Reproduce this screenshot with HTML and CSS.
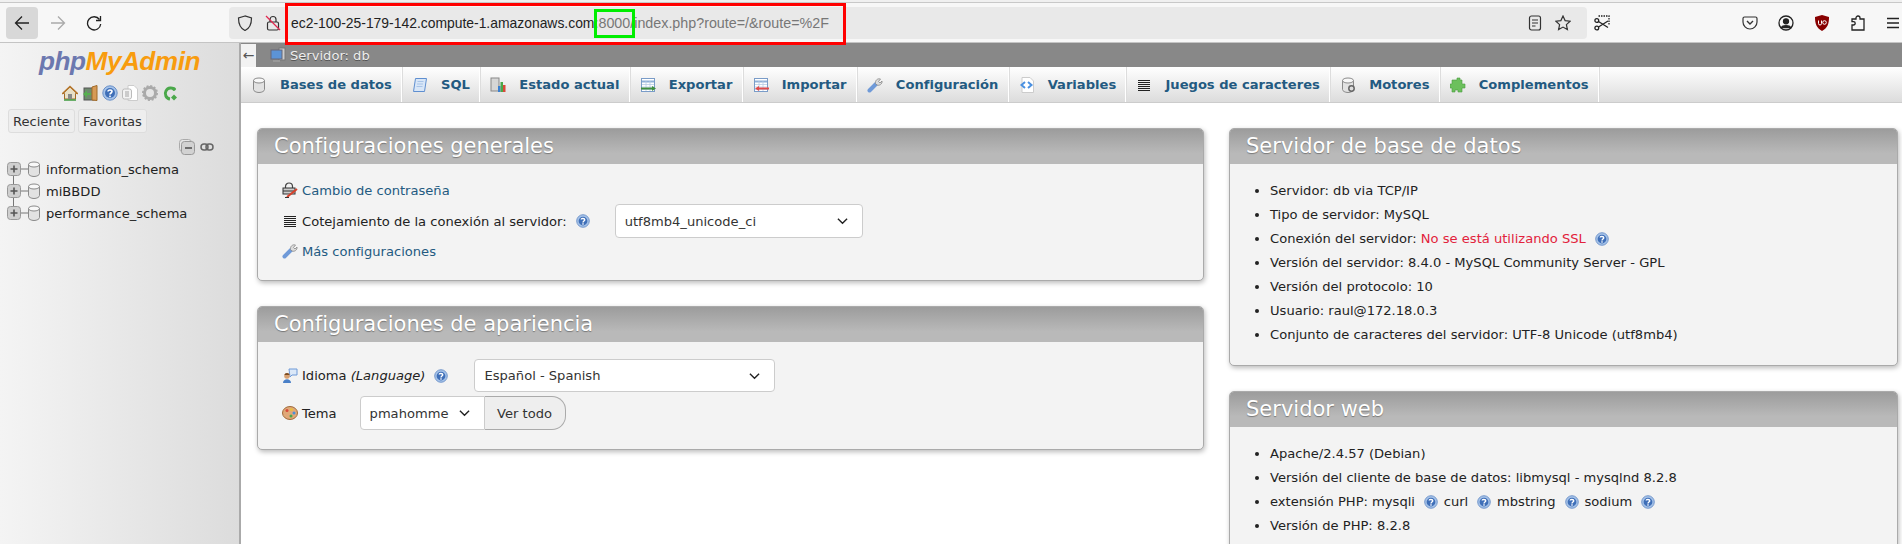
FILE: index.html
```html
<!DOCTYPE html>
<html lang="es">
<head>
    <meta charset="UTF-8">
    <title>phpMyAdmin</title>
    <link rel="stylesheet" href="styles.css">
</head>
<body>
<svg class="defs" width="0" height="0">
    <symbol id="i-help" viewBox="0 0 16 16">
        <circle cx="8" cy="8" r="7.2" fill="#a5c2e8" stroke="#6a90c8"/>
        <circle cx="8" cy="8" r="5" fill="#3f6fb8"/>
        <path d="M6 6.4C6 4.6 10 4.6 10 6.6 10 8 8 8 8 9.6" fill="none" stroke="#fff" stroke-width="1.6"/>
        <rect x="7.2" y="10.6" width="1.6" height="1.6" fill="#fff"/>
    </symbol>
    <symbol id="i-db" viewBox="0 0 16 16">
        <path d="M2.500 3.500v9C2.500 14 5 15.500 8 15.500s5.500-1.500 5.500-3v-9z" fill="#e2e2e2" stroke="#8a8a8a"/>
        <ellipse cx="8" cy="3.500" rx="5.500" ry="2.500" fill="#f8f8f8" stroke="#8a8a8a"/>
    </symbol>
    <symbol id="i-plus" viewBox="0 0 21 22">
        <rect x=".5" y="4.500" width="13" height="13" rx="3" fill="#cfcfcf" stroke="#999"/>
        <path d="M3.500 11h7M7 7.500v7" stroke="#555" stroke-width="1.600"/>
        <path d="M14 11h7" stroke="#777"/>
    </symbol>
    <symbol id="i-lines" viewBox="0 0 16 16">
        <path d="M2 3.500h12M2 5.500h12M2 7.500h12M2 9.500h12M2 11.500h12M2 13.500h12" stroke="#222" stroke-width="1"/>
    </symbol>
    <symbol id="i-wrench" viewBox="0 0 16 16">
        <path d="M2.500 13.500 9 7" stroke="#6f9ad8" stroke-width="4" stroke-linecap="round"/>
        <path d="M8.500 6.500C8 3.500 10.500 1 13.500 2L11.500 4.500 13 6 15 4C15.500 7 12.500 9 10 8z" fill="#dcdcdc" stroke="#888" stroke-width=".8"/>
    </symbol>
    <symbol id="i-sheet" viewBox="0 0 16 16">
        <rect x="1.500" y="1.500" width="13" height="13" fill="#fff" stroke="#7a9cc8"/>
        <path d="M2 4.500h12" stroke="#8fb0d8" stroke-width="2"/>
        <path d="M2 7.500h12M2 10h12M2 12.500h12M6 4v10M10 4v10" stroke="#b7cbe4" stroke-width=".8"/>
    </symbol>
</svg>

<div class="strip"></div>
<header class="toolbar">
    <button class="nav-btn is-active" aria-label="Atrás">
        <svg width="16" height="16" viewBox="0 0 16 16" fill="none" stroke="#222" stroke-width="1.300"><path d="M15 8H1.500M8 1.500 1.500 8 8 14.500"/></svg>
    </button>
    <button class="nav-btn" aria-label="Adelante">
        <svg width="16" height="16" viewBox="0 0 16 16" fill="none" stroke="#aaa" stroke-width="1.300"><path d="M1 8h13.500M8 1.500 14.500 8 8 14.500"/></svg>
    </button>
    <button class="nav-btn" aria-label="Recargar">
        <svg width="16" height="16" viewBox="0 0 16 16" fill="none" stroke="#222" stroke-width="1.300"><path d="M13.500 4.500A6.600 6.600 0 1 0 14.700 9"/><path d="M14.500 1v4.500H10"/></svg>
    </button>
    <div class="urlbar">
        <svg class="url-icon" width="16" height="16" viewBox="0 0 16 16" fill="none" stroke="#333" stroke-width="1.200"><path d="M8 1 1.500 3c0 5 1 10 6.500 12.500C13.500 13 14.500 8 14.500 3z"/></svg>
        <svg class="url-icon lock" width="16" height="16" viewBox="0 0 16 16" fill="none" stroke="#333" stroke-width="1.200"><rect x="2.500" y="7" width="11" height="8" rx="1.500"/><path d="M5 7V4.500a3 3 0 0 1 6 0V7"/><path d="M1 1l14 14" stroke="#e22850"/></svg>
        <div class="url"><span class="host">ec2-100-25-179-142.compute-1.amazonaws.com</span>:8000/index.php?route=/&amp;route=%2F</div>
        <svg class="url-icon" width="16" height="16" viewBox="0 0 16 16" fill="none" stroke="#333" stroke-width="1.200"><rect x="2.500" y="1" width="11" height="14" rx="2"/><path d="M5 5h6M5 8h6M5 11h3.500"/></svg>
        <svg class="url-icon star" width="16" height="16" viewBox="0 0 16 16" fill="none" stroke="#333" stroke-width="1.200"><path d="M8 1l2.100 4.600 5 .6-3.700 3.400 1 5L8 12.100 3.600 14.600l1-5L.9 6.200l5-.6z"/></svg>
    </div>
    <svg class="shot" width="16" height="16" viewBox="0 0 16 16" fill="none" stroke="#222" stroke-width="1.300"><path d="M4.500 1h10.500v9.500" stroke-dasharray="1.500 1"/><circle cx="2.800" cy="5.500" r="1.900"/><circle cx="2.800" cy="13" r="1.900"/><path d="M4.500 6.500 14 12.500M4.500 12 14 6"/></svg>
    <div class="tools">
        <svg width="16" height="16" viewBox="0 0 16 16" fill="none" stroke="#333" stroke-width="1.200"><path d="M2.500 2h11A1.500 1.500 0 0 1 15 3.500V7A7 7 0 0 1 1 7V3.500A1.500 1.500 0 0 1 2.500 2z"/><path d="M5 6l3 3 3-3" stroke-width="1.400"/></svg>
        <svg width="16" height="16" viewBox="0 0 16 16" fill="none" stroke="#222" stroke-width="1.300"><circle cx="8" cy="8" r="7"/><circle cx="8" cy="6.300" r="2.500" fill="#222"/><path d="M3.500 12.500c1-2.500 8-2.500 9 0z" fill="#222"/></svg>
        <svg width="16" height="16" viewBox="0 0 16 16"><path d="M8 0 15 2c0 7-1.500 11-7 14C2.500 13 1 9 1 2z" fill="#800"/><path d="M4.500 5.500v3a1.500 1.500 0 0 0 3 0v-3" fill="none" stroke="#fff" stroke-width="1"/><circle cx="10.500" cy="7.500" r="1.800" fill="none" stroke="#fff"/></svg>
        <svg width="16" height="16" viewBox="0 0 16 16" fill="none" stroke="#222" stroke-width="1.300"><path d="M2 15V10h1.500a1.700 1.700 0 0 0 0-3.400H2V4h4V3a2 2 0 0 1 4 0v1h4v11z"/></svg>
        <svg width="14" height="16" viewBox="0 0 14 16" stroke="#222" stroke-width="1.300"><path d="M1 3.500h12M1 8h12M1 12.500h12"/></svg>
    </div>
</header>
<div class="annot-url"></div>
<div class="annot-port"></div>

<div class="main">
    <aside class="sidebar">
        <div class="logo"><span class="logo-php">php</span><span class="logo-my">MyAdmin</span></div>
        <div class="side-icons">
            <svg width="16" height="16" viewBox="0 0 16 16"><path d="M1 8.500 8 2l7 6.500-1.500 0V14h-11V8.500z" fill="#e8e0c8" stroke="#a06a28"/><path d="M0 9 8 1.500 16 9" fill="none" stroke="#b5762c" stroke-width="1.500"/><rect x="6" y="9" width="4" height="5" fill="#888"/><path d="M2 15h12" stroke="#3f9a3f" stroke-width="1.500"/></svg>
            <svg width="16" height="16" viewBox="0 0 16 16"><rect x="2" y="3" width="10" height="12" fill="#6f8a6f" stroke="#555"/><path d="M10 2l5-1.500v15L10 15z" fill="#d69a55" stroke="#a06a28"/><path d="M1 9l4-3.500V8h4v2H5v2.500z" fill="#56b04f"/></svg>
            <svg width="16" height="16"><use href="#i-help"/></svg>
            <svg width="16" height="16" viewBox="0 0 16 16"><path d="M6 .5h6l3.500 3.500v11.500H6z" fill="#fff" stroke="#ccc"/><rect x=".5" y="4" width="9" height="10" rx="2" fill="#f3f3f3" stroke="#bbb"/><rect x="3" y="6" width="4" height="6" fill="#ccc"/></svg>
            <svg width="16" height="16" viewBox="0 0 16 16"><circle cx="8" cy="8" r="5.500" fill="none" stroke="#aaa" stroke-width="3"/><circle cx="8" cy="8" r="7" fill="none" stroke="#aaa" stroke-width="2" stroke-dasharray="2 1.660"/></svg>
            <svg width="16" height="16" viewBox="0 0 16 16" fill="none"><path d="M13 5A5.500 5.500 0 1 0 8 14" stroke="#4aa84a" stroke-width="3"/><path d="M9 12.500l3-3 3 3-3 3z" fill="#4aa84a"/><circle cx="12" cy="4" r="1.800" fill="#4aa84a"/></svg>
        </div>
        <div class="side-tabs">
            <button class="side-btn">Reciente</button>
            <button class="side-btn">Favoritas</button>
        </div>
        <div class="tree-tools">
            <svg width="16" height="16" viewBox="0 0 16 16"><rect x=".5" y=".5" width="12" height="12" rx="3" fill="#e6e6e6" stroke="#aaa"/><rect x="2.500" y="2.500" width="13" height="13" rx="3" fill="#d2d2d2" stroke="#999"/><path d="M6 9h7" stroke="#555" stroke-width="1.600"/></svg>
            <svg width="14" height="10" viewBox="0 0 14 10" fill="none" stroke="#666" stroke-width="1.500"><rect x="1" y="2" width="7" height="6" rx="3"/><rect x="6" y="2" width="7" height="6" rx="3"/></svg>
        </div>
        <ul class="tree">
            <li class="tree-row"><svg width="21" height="22" viewBox="0 0 21 22"><use href="#i-plus" width="21" height="22"/><path d="M6.500 18v4" stroke="#777"/></svg><svg class="db" width="16" height="16"><use href="#i-db"/></svg>information_schema</li>
            <li class="tree-row"><svg width="21" height="22" viewBox="0 0 21 22"><use href="#i-plus" width="21" height="22"/><path d="M6.500 0v4M6.500 18v4" stroke="#777"/></svg><svg class="db" width="16" height="16"><use href="#i-db"/></svg>miBBDD</li>
            <li class="tree-row"><svg width="21" height="22" viewBox="0 0 21 22"><use href="#i-plus" width="21" height="22"/><path d="M6.500 0v4" stroke="#777"/></svg><svg class="db" width="16" height="16"><use href="#i-db"/></svg>performance_schema</li>
        </ul>
    </aside>

    <div class="content">
        <div class="crumbs">
            <span class="back-box">←</span>
            <svg width="16" height="16" viewBox="0 0 16 16"><rect x="9" y="1" width="6" height="12" fill="#ccc" stroke="#777"/><rect x="1" y="3" width="11" height="9" fill="#5c93d6" stroke="#667"/><rect x="3" y="13" width="7" height="2" fill="#999"/></svg>
            <span class="crumb-text">Servidor: db</span>
        </div>
        <nav class="tabs">
            <a class="tab"><svg width="16" height="16"><use href="#i-db"/></svg>Bases de datos</a>
            <a class="tab"><svg width="16" height="16" viewBox="0 0 16 16"><path d="M3.500 1.500h11L12.500 14.500h-11z" fill="#d8e6f7" stroke="#5f8fd0"/><path d="M5.500 4.500h6M5 7h6M4.500 9.500h6" stroke="#a8c4e8"/></svg>SQL</a>
            <a class="tab"><svg width="16" height="16" viewBox="0 0 16 16"><rect x="1" y="1" width="8" height="13" fill="#d6d6d6" stroke="#888"/><rect x="8" y="9" width="2.500" height="6" fill="#3a7fd0"/><rect x="10.500" y="5" width="2.500" height="10" fill="#4aa84a"/><rect x="13" y="8" width="2.500" height="7" fill="#d84a3a"/></svg>Estado actual</a>
            <a class="tab"><svg width="16" height="16" viewBox="0 0 16 16"><use href="#i-sheet" width="16" height="16"/><path d="M1 11.500h11" stroke="#3f8f3f" stroke-width="2"/><path d="M12 9l4 2.500L12 14z" fill="#3f8f3f"/></svg>Exportar</a>
            <a class="tab"><svg width="16" height="16" viewBox="0 0 16 16"><use href="#i-sheet" width="16" height="16"/><path d="M5 11.500h11" stroke="#e04a4a" stroke-width="2"/><path d="M6 9l-4 2.500L6 14z" fill="#e04a4a"/></svg>Importar</a>
            <a class="tab"><svg width="16" height="16"><use href="#i-wrench"/></svg>Configuración</a>
            <a class="tab"><svg width="16" height="16" viewBox="0 0 16 16"><path d="M3 .5h8l3.500 3.500v11.500H3z" fill="#fff" stroke="#ccc"/><path d="M6 5 2.500 8 6 11" fill="none" stroke="#4a90e0" stroke-width="2"/><path d="M9 5l3.500 3L9 11" fill="none" stroke="#4a90e0" stroke-width="2"/></svg>Variables</a>
            <a class="tab"><svg width="16" height="16"><use href="#i-lines"/></svg>Juegos de caracteres</a>
            <a class="tab"><svg width="16" height="16" viewBox="0 0 16 16"><use href="#i-db" width="16" height="16"/><circle cx="11.500" cy="11.500" r="2.700" fill="#ddd" stroke="#666" stroke-width="1.500"/></svg>Motores</a>
            <a class="tab"><svg width="16" height="16" viewBox="0 0 16 16"><path d="M5 3h2V1h3v2h2v4h3v4h-3v4H8v-2H5v2H2v-4H0V7h2V3z" fill="#6cc05c" stroke="#4a9a40" stroke-width=".6"/></svg>Complementos</a>
        </nav>

        <div class="columns">
            <div class="col">
                <section class="panel">
                    <h2 class="panel-head">Configuraciones generales</h2>
                    <div class="panel-body form-general">
                        <div class="row">
                            <svg width="16" height="16" viewBox="0 0 16 16"><path d="M3.500 6V4.500a3.500 3.500 0 0 1 7 0V6" fill="none" stroke="#444" stroke-width="1.200"/><rect x="1" y="6" width="12" height="6" fill="#ccc" stroke="#333"/><path d="M1 9h12" stroke="#333"/><path d="M5 15 15 7" stroke="#d8402a" stroke-width="2"/><path d="M3 15.500h4" stroke="#333"/></svg>
                            <a class="link">Cambio de contraseña</a>
                        </div>
                        <div class="row">
                            <svg width="16" height="16"><use href="#i-lines"/></svg>
                            <span>Cotejamiento de la conexión al servidor:</span>
                            <svg class="help" width="14" height="14"><use href="#i-help"/></svg>
                            <div class="select select-coll"><span>utf8mb4_unicode_ci</span><svg width="11" height="8" viewBox="0 0 12 8" fill="none" stroke="#222" stroke-width="1.500"><path d="M1 1.500l5 5 5-5"/></svg></div>
                        </div>
                        <div class="row">
                            <svg width="16" height="16"><use href="#i-wrench"/></svg>
                            <a class="link">Más configuraciones</a>
                        </div>
                    </div>
                </section>
                <section class="panel">
                    <h2 class="panel-head">Configuraciones de apariencia</h2>
                    <div class="panel-body form-look">
                        <div class="row">
                            <svg width="16" height="16" viewBox="0 0 16 16"><path d="M7 1h8v6h-5l-2 2z" fill="#dbe8f8" stroke="#6f9ad8"/><circle cx="5" cy="8" r="2.800" fill="#d8a070"/><path d="M1 15c0-5 8-5 8 0z" fill="#4a80c8"/><path d="M2.300 7a2.800 2.800 0 0 1 5.400 0z" fill="#7a4a20"/></svg>
                            <span>Idioma <em>(Language)</em></span>
                            <svg class="help" width="14" height="14"><use href="#i-help"/></svg>
                            <div class="select select-lang"><span>Español - Spanish</span><svg width="11" height="8" viewBox="0 0 12 8" fill="none" stroke="#222" stroke-width="1.500"><path d="M1 1.500l5 5 5-5"/></svg></div>
                        </div>
                        <div class="row">
                            <svg width="16" height="16" viewBox="0 0 16 16"><ellipse cx="8" cy="8" rx="7.500" ry="6.500" fill="#e0a878" stroke="#a06a38"/><circle cx="5" cy="5.500" r="1.500" fill="#d84a3a"/><circle cx="9.500" cy="4.500" r="1.500" fill="#e8c040"/><circle cx="12" cy="8" r="1.500" fill="#4a90d8"/><circle cx="9" cy="11" r="1.500" fill="#4aa84a"/></svg>
                            <span class="theme-label">Tema</span>
                            <div class="select select-theme"><span>pmahomme</span><svg width="11" height="8" viewBox="0 0 12 8" fill="none" stroke="#222" stroke-width="1.500"><path d="M1 1.500l5 5 5-5"/></svg></div>
                            <button class="view-all">Ver todo</button>
                        </div>
                    </div>
                </section>
            </div>
            <div class="col">
                <section class="panel">
                    <h2 class="panel-head">Servidor de base de datos</h2>
                    <ul class="panel-body info">
                        <li>Servidor: db via TCP/IP</li>
                        <li>Tipo de servidor: MySQL</li>
                        <li>Conexión del servidor: <span class="warn">No se está utilizando SSL</span> <svg class="help" width="14" height="14"><use href="#i-help"/></svg></li>
                        <li>Versión del servidor: 8.4.0 - MySQL Community Server - GPL</li>
                        <li>Versión del protocolo: 10</li>
                        <li>Usuario: raul@172.18.0.3</li>
                        <li>Conjunto de caracteres del servidor: UTF-8 Unicode (utf8mb4)</li>
                    </ul>
                </section>
                <section class="panel">
                    <h2 class="panel-head">Servidor web</h2>
                    <ul class="panel-body info">
                        <li>Apache/2.4.57 (Debian)</li>
                        <li>Versión del cliente de base de datos: libmysql - mysqlnd 8.2.8</li>
                        <li>extensión PHP: mysqli <svg class="help" width="14" height="14"><use href="#i-help"/></svg> curl <svg class="help" width="14" height="14"><use href="#i-help"/></svg> mbstring <svg class="help" width="14" height="14"><use href="#i-help"/></svg> sodium <svg class="help" width="14" height="14"><use href="#i-help"/></svg></li>
                        <li>Versión de PHP: 8.2.8</li>
                    </ul>
                </section>
            </div>
        </div>
    </div>
</div>
</body>
</html>
```

FILE: styles.css
```css
*{ box-sizing:border-box; }
html, body{ margin:0; padding:0; height:544px; overflow:hidden; }
body{ position:relative; font:13.080px "DejaVu Sans", sans-serif; color:#222; background:#fff; display:flex; flex-direction:column; }
ul{ list-style:none; margin:0; padding:0; }
svg{ flex:none; }
button{ font:inherit; }
.defs{ position:absolute; }

/* browser chrome */
.strip{ height:3px; background:#f0f0f0; border-bottom:1px solid #c8c8c8; flex:none; }
.toolbar{ height:40px; flex:none; background:#f7f7f7; border-bottom:1px solid #c4c4c4; display:flex; align-items:center; padding:1px 2px 0 6px; }
.nav-btn{ width:32px; height:32px; border:0; border-radius:4px; background:none; padding:0; margin-right:4px; display:flex; align-items:center; justify-content:center; }
.nav-btn.is-active{ background:#d8d8d8; }
.urlbar{ margin-left:115px; width:1358px; height:32px; background:#e9e9e9; border-radius:4px; display:flex; align-items:center; padding:0 16px 0 8px; }
.url-icon.lock{ margin-left:12px; }
.url-icon.star{ margin-left:12px; }
.url{ flex:1; margin-left:10px; font:14.300px "Liberation Sans", sans-serif; color:#777; white-space:nowrap; }
.host{ color:#222; font-size:13.900px; }
.shot{ margin-left:7px; }
.tools{ margin-left:132px; display:flex; gap:20px; }
.annot-url{ position:absolute; left:285px; top:3px; width:561px; height:42px; border:3px solid #f00; }
.annot-port{ position:absolute; left:594px; top:9px; width:41px; height:29px; border:3px solid #0e0; }

/* layout */
.main{ flex:1; display:flex; min-height:0; }
.sidebar{ width:241px; flex:none; background:linear-gradient(to right,#f4f4f4,#dcdcdc); border-right:2px solid #aaa; padding-top:2px; }
.content{ flex:1; min-width:0; }

/* navigation panel */
.logo{ text-align:center; font:italic bold 26.200px/32px "Liberation Sans", sans-serif; letter-spacing:-.5px; }
.logo-php{ color:#6c78af; }
.logo-my{ color:#f89c0e; }
.side-icons{ display:flex; justify-content:center; gap:4px; margin-top:8px; }
.side-tabs{ display:flex; gap:3px; padding-left:8px; margin-top:8px; }
.side-btn{ height:24px; padding:0 4px; border:1px solid #ddd; border-radius:3px; background:#eee; color:#333; }
.tree-tools{ display:flex; align-items:center; gap:5px; padding-left:179px; margin-top:6px; }
.tree{ margin-top:3px; }
.tree-row{ height:22px; display:flex; align-items:center; padding-left:7px; color:#222; }
.db{ margin:0 4px 0 -2px; }

/* server bar and tabs */
.crumbs{ height:24px; background:#888; display:flex; align-items:center; gap:4px; }
.back-box{ width:15px; height:23px; background:#f2f2f2; color:#555; font-size:14px; line-height:22px; text-align:center; margin-right:10px; }
.crumb-text{ color:#eee; text-shadow:0 1px 0 #555; }
.tabs{ height:36px; display:flex; background:linear-gradient(#fff,#dcdcdc); border-bottom:1px solid #ccc; }
.tab{ display:flex; align-items:center; gap:13px; padding:0 9.300px 0 10px; border-right:1px solid #fff; box-shadow:1px 0 0 #ddd; color:#235a81; font-weight:bold; white-space:nowrap; }

/* panels */
.columns{ display:grid; grid-template-columns:947px 669px; gap:25px; padding:25px 0 0 16px; }
.col{ display:flex; flex-direction:column; gap:25px; min-width:0; }
.panel{ background:#f3f3f3; border:1px solid #aaa; border-radius:5px; box-shadow:1px 2px 5px #bbb; }
.panel-head{ margin:0; height:35px; padding-left:16px; background:linear-gradient(#9c9c9c,#b9b9b9 70%); border-radius:4px 4px 0 0; color:#fff; font-size:21px; font-weight:normal; line-height:35px; text-shadow:0 1px 1px #777; white-space:nowrap; }
.row{ display:flex; align-items:center; gap:4px; padding-left:24px; }
.form-general{ padding:16px 0 19px; display:flex; flex-direction:column; }
.form-general .row:first-child{ height:20px; margin-bottom:4px; }
.form-general .row:last-child{ height:20px; margin-top:3px; }
.form-look{ padding:17px 0 19px; display:flex; flex-direction:column; gap:4px; }
.link{ color:#235a81; }
.help{ vertical-align:-3px; margin:0 3px 0 5px; }
em{ font-style:italic; }
.select{ height:34px; background:#fff; border:1px solid #ccc; border-radius:4px; display:flex; align-items:center; justify-content:space-between; padding:0 14px 0 9px; color:#333; }
.select-coll{ width:248px; margin-left:18px; }
.select-lang{ width:301px; height:33px; margin-left:19px; }
.select-theme{ width:125px; margin-left:19px; border-radius:4px 0 0 4px; }
.view-all{ width:81px; height:34px; background:#eee; color:#333; border:1px solid #aaa; border-left:0; border-radius:0 14px 14px 0; margin-left:-4px; }
.info{ list-style:disc; padding:15px 0 18px 40px; }
.info li{ height:24px; line-height:24px; white-space:nowrap; }
.info .help{ margin-right:1.500px; }
.warn{ color:#e2223c; }
```
